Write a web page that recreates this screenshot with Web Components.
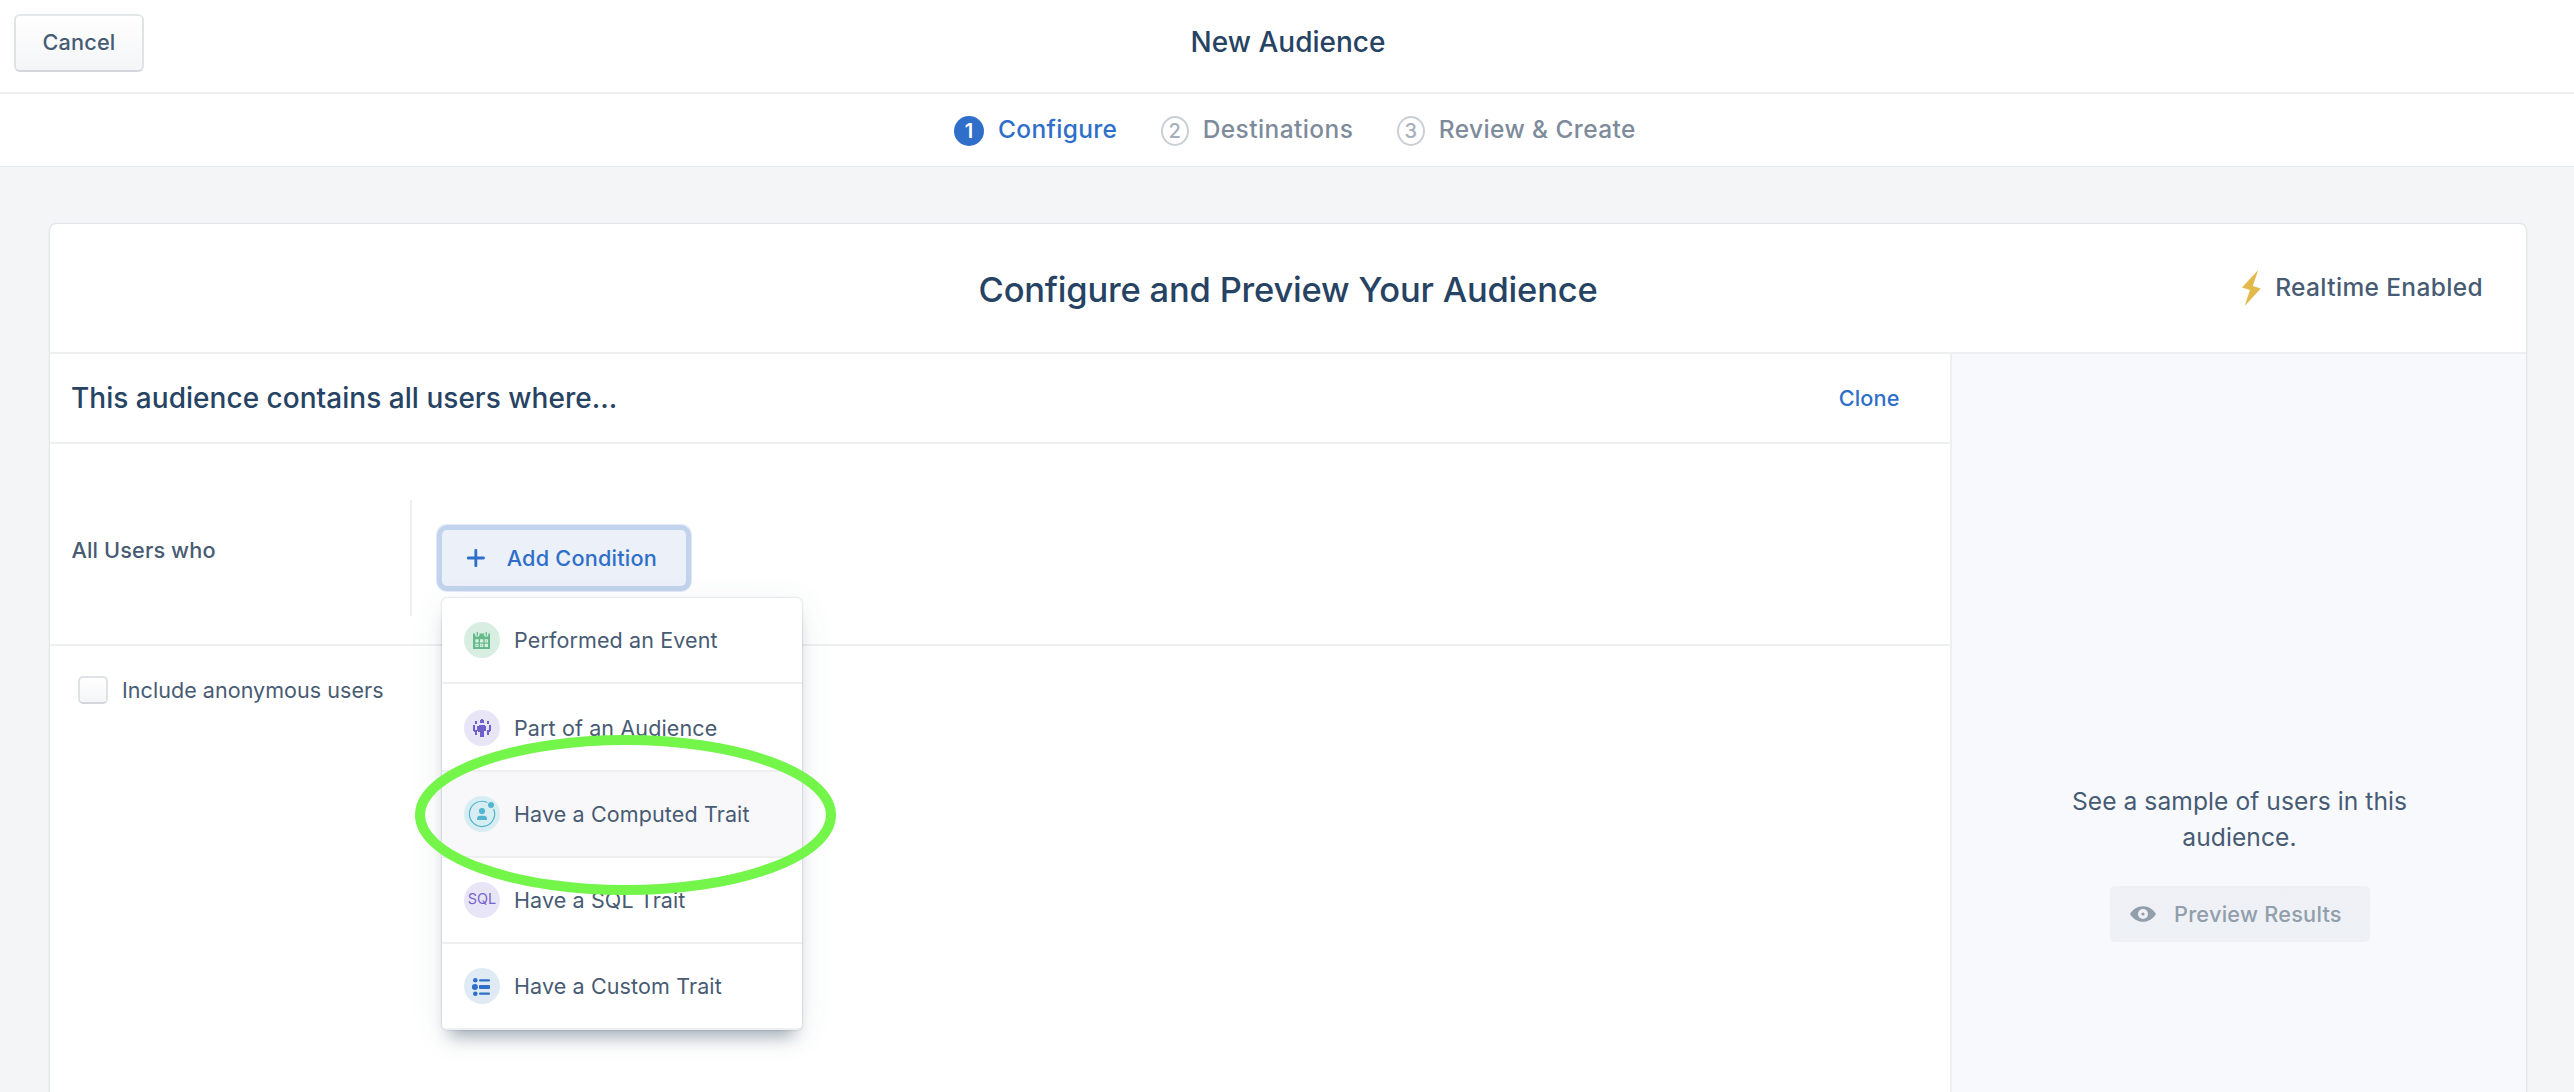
<!DOCTYPE html>
<html lang="en">
<head>
<meta charset="utf-8">
<title>New Audience</title>
<style>
html, body { margin: 0; height: 100%; overflow: hidden; }
body {
  --heading: #274363; --text: #475b73; --muted: #7e8b9b; --blue: #2f6fc9; --line: #eeeff1;
  font-family: Inter, "Liberation Sans", sans-serif; font-size: 21.7px; color: var(--text);
  background: #f4f5f7; line-height: 1.2;
}
</style>
</head>
<body>
<new-audience-page></new-audience-page>
<script>
const define = (name, html) => {
  const tpl = document.createElement('template');
  tpl.innerHTML = html;
  customElements.define(name, class extends HTMLElement {
    constructor() {
      super();
      this.attachShadow({ mode: 'open' }).append(tpl.content.cloneNode(true));
    }
  });
};

define('ui-button', `
<style>
:host { display: inline-flex; align-items: center; justify-content: center; box-sizing: border-box; height: 58px; padding: 0 0 2px; font-weight: 460; letter-spacing: .16px; white-space: nowrap; color: var(--text); border: 2px solid #dfe3e7; border-bottom-color: #d3d7dc; border-top-color: #e4e8eb; border-radius: 6px; background: linear-gradient(#fff, #f4f5f7); }
:host([kind=focus]) { height: 56px; padding: 0 29px 0 25px; gap: 22px; border: 0; border-radius: 5px; color: var(--blue); background: #ecf0f9; box-shadow: 0 0 0 5px #c2d3ed, 0 0 0 6px #e3ebf7; letter-spacing: .2px; }
:host([kind=disabled]) { height: 56px; padding: 0 0 0 20px; gap: 18.5px; border: 0; border-radius: 5px; justify-content: flex-start; color: #919eab; background: linear-gradient(#eff0f5, #edf1f5); letter-spacing: .24px; }
</style><slot name="icon"></slot><slot></slot>`);

define('app-header', `
<style>
:host { display: grid; grid-template-columns: 1fr auto 1fr; align-items: center; height: 92px; background: #fff; border-bottom: 2px solid var(--line); }
ui-button { width: 130px; margin: 0 0 6px 14px; justify-self: start; }
.title { font-size: 28px; font-weight: 480; color: var(--heading); padding: 0 0 6px 2px; }
</style><ui-button>Cancel</ui-button><div class="title"><slot></slot></div>`);

define('step-item', `
<style>
:host { display: flex; align-items: center; gap: 14px; font-size: 24.5px; font-weight: 480; letter-spacing: .4px; color: var(--muted); white-space: nowrap; }
.num { box-sizing: border-box; width: 28px; height: 30px; border: 2px solid #c9cfd5; border-radius: 50%; display: flex; align-items: center; justify-content: center; font-size: 20px; letter-spacing: 0; color: #a6b0ba; margin-top: 2px; }
.label { padding-bottom: 1px; }
:host([active]) { color: var(--blue); letter-spacing: .32px; }
:host([active]) .num { width: 30px; border: 0; background: #2f6fc9; color: #fff; font-weight: 600; }
</style><span class="num"><slot name="num"></slot></span><span class="label"><slot></slot></span>`);

define('step-bar', `
<style>
:host { display: flex; align-items: center; gap: 43.5px; height: 72px; padding-left: 954px; background: #fff; border-bottom: 1px solid #e4e7ea; }
</style><slot></slot>`);

define('realtime-badge', `
<style>
:host { display: flex; align-items: center; gap: 14.5px; font-size: 24.5px; font-weight: 480; letter-spacing: .36px; }
</style><svg width="19" height="36" viewBox="0 0 19 36"><path d="M16.2 0 0 17.6l8 2.4-5.4 16L18.8 18.6l-8-2.7z" fill="#e3b94b"/></svg><span><slot></slot></span>`);

define('card-header', `
<style>
:host { display: grid; grid-template-columns: 1fr auto 1fr; align-items: center; height: 128px; border-bottom: 2px solid var(--line); }
.title { grid-column: 2; font-size: 34.5px; font-weight: 480; letter-spacing: -.2px; color: var(--heading); padding-top: 4px; }
realtime-badge { justify-self: end; margin-right: 43px; }
</style><div class="title"><slot></slot></div><realtime-badge>Realtime Enabled</realtime-badge>`);

define('section-header', `
<style>
:host { display: flex; align-items: center; justify-content: space-between; height: 88px; padding: 0 50.5px 0 21px; border-bottom: 2px solid var(--line); }
.t { font-size: 28px; font-weight: 480; letter-spacing: .03px; color: var(--heading); padding-top: 1px; }
.a { font-weight: 460; letter-spacing: .08px; color: var(--blue); }
</style><span class="t"><slot></slot></span><span class="a"><slot name="action"></slot></span>`);

define('menu-item', `
<style>
:host { display: flex; align-items: center; gap: 14px; height: 84px; padding-left: 22px; font-size: 21.5px; letter-spacing: .12px; border-bottom: 2px solid var(--line); white-space: nowrap; }
:host([tall]) { height: 84px; padding-top: 2px; }
:host([hover]) { background: #f8f8fb; }
.ico { width: 36px; height: 36px; border-radius: 50%; background: var(--tint); display: flex; align-items: center; justify-content: center; font-size: 14.4px; color: #7565cc; letter-spacing: 0; }
.ico ::slotted(span) { padding-bottom: 2px; }
.txt { padding-top: 2px; }
</style><span class="ico"><slot name="icon"></slot></span><span class="txt"><slot></slot></span>`);

define('condition-menu', `
<style>
:host { display: block; width: 360px; background: #fff; border-radius: 5px; overflow: hidden; box-shadow: 0 0 2px rgba(67,90,111,.36), 0 14px 16px -8px rgba(67,90,111,.48), 0 6px 34px rgba(67,90,111,.09); }
svg { display: block; }
</style>
<menu-item style="--tint:#d9eee2"><svg slot="icon" width="36" height="36" viewBox="0 0 36 36"><path d="M9 11.5h17V27H9z" fill="#66ba8a"/><g fill="#d9eee2"><circle cx="13.3" cy="12.5" r="2.3"/><circle cx="22.2" cy="12.5" r="2.3"/><path d="M11.3 17.3h3.3v3.3h-3.3zM16 17.3h3.3v3.3H16zM20.7 17.3H24v3.3h-3.3zM11.3 21.8h3.3V25h-3.3zM16 21.8h3.3V25H16zM20.7 21.8H24V25h-3.3z"/></g><path d="M12.7 10h1.3v3.8h-1.3zM21.6 10h1.3v3.8h-1.3zM21.8 18.4h1.2v1.2h-1.2zM12.4 22.8h1.1v1.4h-1.1zM17.1 22.8h1v1.2h-1z" fill="#66ba8a"/></svg>Performed an Event</menu-item>
<menu-item tall style="--tint:#e8e5f7"><svg slot="icon" width="36" height="36" viewBox="0 0 36 36" fill="#6e5fcb"><path d="M16 10h1V9h2v1h1v3h-4zM14 16h1v-1h6v1h1v5h-2v6h-4v-5h-2v-1h-1v-5zM11 11h2v3h-2zM23 11h2v3h-2zM9 15h2v5h2v5h-2v-3h-1v-1H9zM27 15h-2v5h-2v5h2v-3h1v-1h1z"/></svg>Part of an Audience</menu-item>
<menu-item hover style="--tint:#d8edf2"><svg slot="icon" width="36" height="36" viewBox="0 0 36 36" fill="#53b5cf"><path d="M29.6 13A12.6 12.6 0 1 1 23.3 6.5" fill="none" stroke="#53b5cf" stroke-width="1.2"/><circle cx="27" cy="9" r="3"/><circle cx="18" cy="15" r="3.1"/><path d="M13 24v-1.2c0-1.900 1.200-3 3-3h4c1.800 0 3 1.100 3 3V24z"/></svg>Have a Computed Trait</menu-item>
<menu-item style="--tint:#e8e5f7"><span slot="icon">SQL</span>Have a SQL Trait</menu-item>
<menu-item style="--tint:#e0eaf5"><svg slot="icon" width="36" height="36" viewBox="0 0 36 36" fill="#2f6fc9"><circle cx="11.300" cy="12.300" r="2.300"/><circle cx="10.900" cy="19" r="3"/><circle cx="11.300" cy="25.700" r="2.300"/><rect x="15" y="11.300" width="11" height="2.100" rx="1"/><rect x="15" y="17" width="11" height="4" rx="1"/><rect x="15" y="24.600" width="11" height="2.100" rx="1"/></svg>Have a Custom Trait</menu-item>`);

define('condition-row', `
<style>
:host { display: flex; align-items: flex-start; box-sizing: border-box; height: 202px; padding-top: 56px; border-bottom: 2px solid var(--line); }
.label { box-sizing: border-box; width: 362px; height: 116px; padding: 0 0 16px 21.5px; display: flex; align-items: center; border-right: 2px solid var(--line); font-weight: 460; letter-spacing: .12px; }
.pick { position: relative; margin: 30px 0 0 30px; height: 56px; display: flex; }
ui-button { width: 244px; justify-content: flex-start; }
condition-menu { position: absolute; left: 0; top: 68px; z-index: 2; }
.mark { position: absolute; left: -27px; top: 205px; z-index: 3; }
</style>
<div class="label"><slot></slot></div>
<div class="pick">
<ui-button kind="focus"><svg slot="icon" width="18" height="18" viewBox="0 0 18 18"><path d="M9 1.200v15.600M1.200 9h15.600" stroke="#2f6fc9" stroke-width="2.900" stroke-linecap="round"/></svg>Add Condition</ui-button>
<condition-menu></condition-menu>
<svg class="mark" width="421" height="160" viewBox="0 0 421 160"><ellipse cx="210.500" cy="80" rx="205.500" ry="75" fill="none" stroke="#73f54a" stroke-width="10"/></svg>
</div>`);

define('check-option', `
<style>
:host { display: flex; align-items: center; gap: 14px; padding: 30px 0 0 28px; font-size: 21.5px; letter-spacing: .05px; }
.box { box-sizing: border-box; width: 30px; height: 28px; border: 2px solid #dfe3e7; border-bottom-color: #d3d7dc; border-radius: 5px; background: linear-gradient(#fff, #f4f5f7); }
.txt { padding-top: 2px; }
</style><span class="box"></span><span class="txt"><slot></slot></span>`);

define('preview-panel', `
<style>
:host { display: flex; flex-direction: column; align-items: center; box-sizing: border-box; padding: 429px 0 0 1px; background: #f7f9fd; border-left: 2px solid var(--line); }
p { margin: 0 0 31px; width: 360px; text-align: center; font-size: 24.6px; letter-spacing: .06px; line-height: 36px; }
ui-button { width: 260px; }
</style><p><slot></slot></p>
<ui-button kind="disabled"><svg slot="icon" width="26" height="16" viewBox="0 0 26 16"><path d="M0 8C3 3.200 7.500.2 13 .2S23 3.200 26 8c-3 4.800-7.500 7.800-13 7.800S3 12.800 0 8z" fill="#919eab"/><circle cx="13" cy="8" r="5" fill="#eff1f5"/><circle cx="13" cy="8" r="1.600" fill="#919eab"/></svg>Preview Results</ui-button>`);

define('audience-card', `
<style>
:host { display: flex; flex-direction: column; margin: 57px 48px 0 50px; height: 900px; background: #fff; border-radius: 6px 6px 0 0; box-shadow: 0 0 2px rgba(67,90,111,.38); }
.body { flex: 1; display: grid; grid-template-columns: 1900px 1fr; }
</style>
<card-header>Configure and Preview Your Audience</card-header>
<div class="body">
<div>
<section-header>This audience contains all users where...<span slot="action">Clone</span></section-header>
<condition-row>All Users who</condition-row>
<check-option>Include anonymous users</check-option>
</div>
<preview-panel>See a sample of users in this audience.</preview-panel>
</div>`);

define('new-audience-page', `
<style>:host { display: block; height: 1092px; overflow: hidden; }</style>
<app-header>New Audience</app-header>
<step-bar>
<step-item active><span slot="num">1</span>Configure</step-item>
<step-item><span slot="num">2</span>Destinations</step-item>
<step-item><span slot="num">3</span>Review &amp; Create</step-item>
</step-bar>
<audience-card></audience-card>`);
</script>
</body>
</html>
